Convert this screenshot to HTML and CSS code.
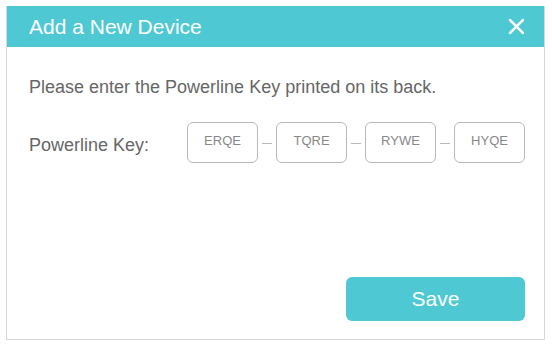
FILE: index.html
```html
<!DOCTYPE html>
<html>
<head>
<meta charset="utf-8">
<link rel="stylesheet" href="styles.css">
</head>
<body>
<div class="dialog">
  <div class="header">
    <span class="title">Add a New Device</span>
    <svg class="close" width="17" height="17" viewBox="0 0 16 16"><path d="M2 2 L14 14 M14 2 L2 14" stroke="#fff" stroke-width="2.4" stroke-linecap="round"/></svg>
  </div>
  <div class="body">
    <p class="intro">Please enter the Powerline Key printed on its back.</p>
    <div class="row">
      <span class="label">Powerline Key:</span>
      <div class="keys">
        <div class="key">ERQE</div>
        <span class="dash"></span>
        <div class="key">TQRE</div>
        <span class="dash"></span>
        <div class="key">RYWE</div>
        <span class="dash"></span>
        <div class="key">HYQE</div>
      </div>
    </div>
    <div class="actions">
      <button class="save">Save</button>
    </div>
  </div>
</div>
</body>
</html>
```
FILE: styles.css
```css
html, body { margin: 0; padding: 0; background: #fff; }
body { padding: 6px 7px 0 6px; font-family: "Liberation Sans", Arial, sans-serif; }
.dialog {
  width: 537px;
  height: 333px;
  border: 1px solid #d8d8d8;
  border-top: none;
  box-sizing: content-box;
  display: flex;
  flex-direction: column;
}
.header {
  height: 41px;
  background: #4ec9d4;
  display: flex;
  align-items: center;
  justify-content: space-between;
  padding: 0 19px 0 22px;
}
.title { color: #fff; font-size: 21px; padding-top: 1px; }
.close { display: block; }
.body { flex: 1; display: flex; flex-direction: column; padding: 0 19px 0 22px; }
.intro { margin: 30px 0 0; font-size: 18px; color: #666; line-height: 21px; }
.row { display: flex; align-items: center; margin-top: 24px; }
.label { width: 158px; font-size: 18px; color: #666; padding-top: 6px; }
.keys { display: flex; align-items: center; }
.key {
  width: 69px;
  height: 39px;
  border: 1px solid #b9b9b9;
  border-radius: 6px;
  box-sizing: content-box;
  text-align: center;
  font-size: 13px;
  color: #888;
  line-height: 36px;
}
.dash { width: 10px; height: 1px; background: #bbb; margin: 2px 4px 0; }
.actions { margin-top: auto; margin-bottom: 18px; display: flex; justify-content: flex-end; }
.save {
  width: 179px;
  height: 44px;
  border: none;
  border-radius: 6px;
  background: #4ec9d4;
  color: #fff;
  font-family: "Liberation Sans", Arial, sans-serif;
  font-size: 21px;
}
```
